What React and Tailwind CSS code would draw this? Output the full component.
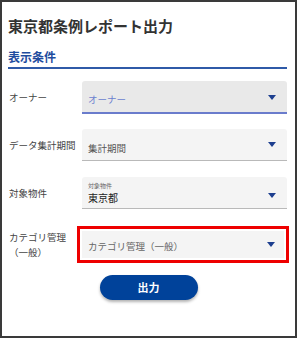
const FONT = { fontFamily: '"Noto Sans CJK JP", "Noto Sans", sans-serif' };

function Arrow() {
  return (
    <svg width="8" height="5" viewBox="0 0 8 5" className="shrink-0">
      <path d="M0 0 L8 0 L4 5 Z" fill="#1d3f8f" />
    </svg>
  );
}

export default function App() {
  return (
    <div
      style={FONT}
      className="w-[297px] h-[338px] border-2 border-[#3a3a3a] bg-white pl-[6px] pr-[8px] box-border overflow-hidden"
    >
      <h1 className="mt-[13px] text-[15px] leading-[22px] font-bold text-[#333]">
        東京都条例レポート出力
      </h1>
      <div className="mt-[12px] border-b-2 border-[#2f5aa8] pb-[2px]">
        <div className="text-[12px] leading-[16px] font-bold text-[#1e4c9e]">表示条件</div>
      </div>

      <div className="mt-[12px] flex items-center">
        <div className="w-[74px] pl-[1px] text-[9.5px] text-[#444]">オーナー</div>
        <div className="flex-1 h-[33px] bg-[#e9e9e9] rounded-t-[3px] border-b-2 border-[#6a7ccc] flex items-end pb-[6px] pl-[6px] pr-[11px]">
          <span className="flex-1 text-[9.5px] leading-[14px] text-[#6b7fcf]">オーナー</span>
          <span className="mb-[6px]"><Arrow /></span>
        </div>
      </div>

      <div className="mt-[15px] flex items-center">
        <div className="w-[74px] pl-[1px] text-[9.5px] text-[#444]">データ集計期間</div>
        <div className="flex-1 h-[32px] bg-[#f4f4f4] rounded-t-[3px] border-b border-[#b9b9b9] flex items-end pb-[5px] pl-[6px] pr-[11px]">
          <span className="flex-1 text-[9.5px] leading-[14px] text-[#555]">集計期間</span>
          <span className="mb-[8px]"><Arrow /></span>
        </div>
      </div>

      <div className="mt-[16px] flex items-center">
        <div className="w-[74px] pl-[1px] text-[9.5px] text-[#444]">対象物件</div>
        <div className="flex-1 h-[32px] bg-[#f4f4f4] rounded-t-[3px] border-b border-[#b9b9b9] flex items-end pb-[3px] pl-[6px] pr-[11px]">
          <div className="flex-1 flex flex-col">
            <span className="text-[6px] leading-[9px] text-[#666]">対象物件</span>
            <span className="text-[10px] leading-[15px] text-[#222]">東京都</span>
          </div>
          <span className="mb-[7px]"><Arrow /></span>
        </div>
      </div>

      <div className="mt-[17px] flex items-start">
        <div className="w-[69px] pl-[1px] pt-[4px] text-[9.5px] leading-[15px] text-[#444]">
          カテゴリ管理
          <br />
          （一般）
        </div>
        <div className="flex-1 border-[3px] border-[#ee0000] p-[2px] -mr-[2px]">
          <div className="h-[27px] bg-[#f4f4f4] flex items-center pl-[6px] pr-[9px]">
            <span className="flex-1 text-[9.5px] leading-[14px] text-[#666] pt-[2px]">カテゴリ管理（一般）</span>
            <Arrow />
          </div>
        </div>
      </div>

      <div className="mt-[12px] flex justify-center pl-[2px]">
        <button className="w-[98px] h-[25px] rounded-full bg-[#00429a] text-white text-[11px] font-bold shadow-[0_2px_3px_rgba(0,0,0,0.3)]">
          出力
        </button>
      </div>
    </div>
  );
}
